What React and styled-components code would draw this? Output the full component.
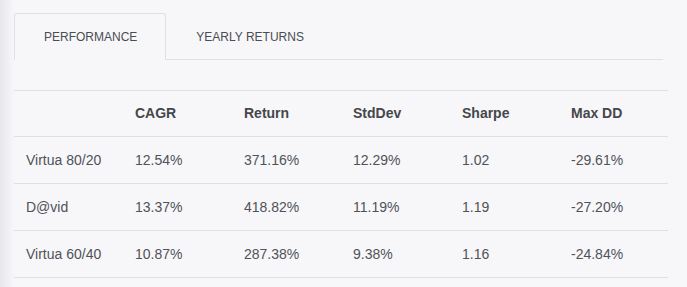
import React, { useState } from "react";
import styled, { createGlobalStyle } from "styled-components";

const GlobalStyle = createGlobalStyle`
  html, body {
    margin: 0;
    padding: 0;
    background: linear-gradient(90deg, #e8e8ec 0px, #f0f0f4 8px, #f7f7fa 14px) #f7f7fa;
    font-family: "Liberation Sans", Arial, sans-serif;
    min-height: 100%;
  }
`;

const rows = [
  { name: "Virtua 80/20", cagr: "12.54%", ret: "371.16%", std: "12.29%", sharpe: "1.02", dd: "-29.61%" },
  { name: "D@vid", cagr: "13.37%", ret: "418.82%", std: "11.19%", sharpe: "1.19", dd: "-27.20%" },
  { name: "Virtua 60/40", cagr: "10.87%", ret: "287.38%", std: "9.38%", sharpe: "1.16", dd: "-24.84%" },
];

export default function App() {
  const [tab, setTab] = useState("performance");
  return (
    <>
      <GlobalStyle />
      <Page>
        <TabBar>
          <Tab active={tab === "performance"} onClick={() => setTab("performance")}>
            PERFORMANCE
          </Tab>
          <Tab active={tab === "yearly"} onClick={() => setTab("yearly")}>
            YEARLY RETURNS
          </Tab>
        </TabBar>
        <Table>
          <thead>
            <tr>
              <Th></Th>
              <Th>CAGR</Th>
              <Th>Return</Th>
              <Th>StdDev</Th>
              <Th>Sharpe</Th>
              <Th>Max DD</Th>
            </tr>
          </thead>
          <tbody>
            {rows.map((r) => (
              <tr key={r.name}>
                <Td>{r.name}</Td>
                <Td>{r.cagr}</Td>
                <Td>{r.ret}</Td>
                <Td>{r.std}</Td>
                <Td>{r.sharpe}</Td>
                <Td>{r.dd}</Td>
              </tr>
            ))}
          </tbody>
        </Table>
      </Page>
    </>
  );
}

const Page = styled.div`
  padding: 13px 19px 0 14px;
`;

const TabBar = styled.div`
  display: flex;
  margin-right: 5px;
  border-bottom: 1px solid #dfdfe4;
`;

const Tab = styled.div`
  padding: 0 28px 0 29px;
  height: 45px;
  display: flex;
  align-items: center;
  font-size: 12px;
  color: #4a4d52;
  cursor: pointer;
  margin-bottom: -1px;
  border: 1px solid ${(p) => (p.active ? "#dfdfe4" : "transparent")};
  border-bottom-color: ${(p) => (p.active ? "#f7f7fa" : "transparent")};
  border-radius: 3px 3px 0 0;
  background: ${(p) => (p.active ? "#f7f7fa" : "transparent")};
`;

const Table = styled.table`
  margin-top: 30px;
  width: 654px;
  border-collapse: collapse;
  table-layout: fixed;
  border-top: 1px solid #dfdfe4;
  font-size: 14px;
`;

const Th = styled.th`
  text-align: left;
  font-weight: bold;
  color: #45474b;
  padding: 12px 12px;
  line-height: 20.5px;
  border-bottom: 1px solid #dfdfe4;
`;

const Td = styled.td`
  color: #505257;
  padding: 12px 12px;
  line-height: 22px;
  border-bottom: 1px solid #dfdfe4;
`;
